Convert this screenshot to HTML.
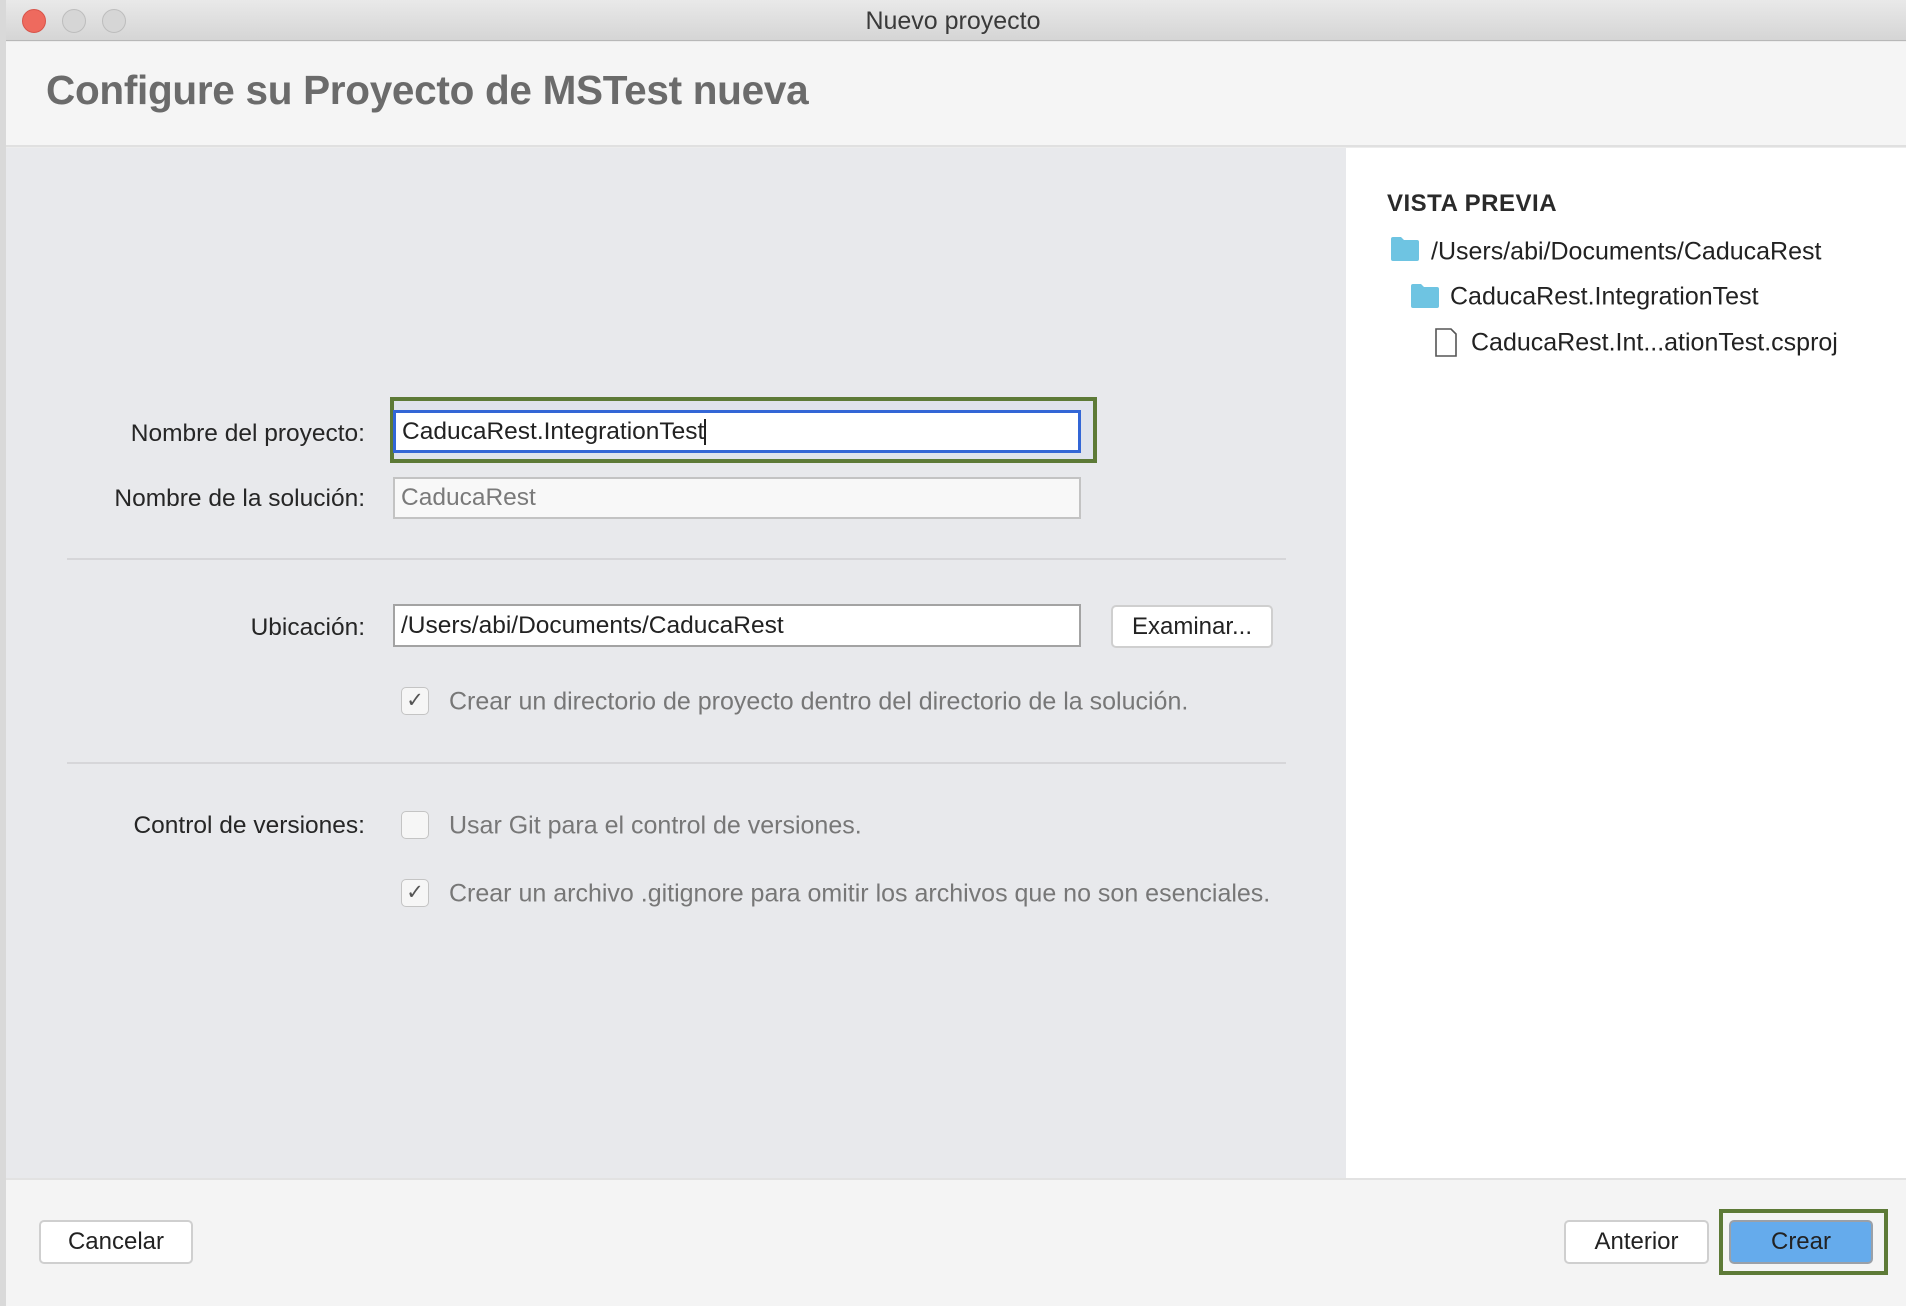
<!DOCTYPE html>
<html><head><meta charset="utf-8"><style>
*{box-sizing:border-box;margin:0;padding:0}
body{width:1906px;height:1306px;position:relative;overflow:hidden;background:#ececec;font-family:"Liberation Sans",sans-serif;color:#222}
.a{position:absolute}
.lbl{position:absolute;right:1541px;font-size:24.5px;color:#262626;white-space:nowrap;transform:translateY(-50%)}
.inp{position:absolute;background:#fff;border:2px solid #a9a9a9;font-size:24.5px;padding-left:6px;display:flex;align-items:center}
.cb{position:absolute;width:28px;height:28px;border:1.5px solid #c4c4c4;border-radius:5px;background:#f6f6f6;font-size:21px;color:#555;text-align:center;line-height:26px}
.ct{position:absolute;font-size:25px;color:#777;white-space:nowrap;transform:translateY(-50%)}
.btn{position:absolute;background:#fff;border:2px solid #cfcfcf;border-radius:5px;font-size:24px;display:flex;align-items:center;justify-content:center;color:#222}
.tv{position:absolute;font-size:25px;color:#222;white-space:nowrap;transform:translateY(-50%)}
</style></head><body>
<div class="a" style="left:0;top:0;width:6px;height:1306px;background:#d9d9d9"></div>
<div class="a" style="left:6px;top:0;width:1900px;height:41px;background:linear-gradient(#e9e9e9,#d5d5d5);border-bottom:1px solid #b8b8b8"></div>
<div class="a" style="left:22px;top:9px;width:24px;height:24px;border-radius:50%;background:#ee6a5e;border:1px solid #d8544a"></div>
<div class="a" style="left:62px;top:9px;width:24px;height:24px;border-radius:50%;background:#d6d6d6;border:1px solid #bdbdbd"></div>
<div class="a" style="left:102px;top:9px;width:24px;height:24px;border-radius:50%;background:#d6d6d6;border:1px solid #bdbdbd"></div>
<div class="a" style="left:0;width:1906px;top:7px;text-align:center;font-size:25px;color:#3a3a3a">Nuevo proyecto</div>
<div class="a" style="left:6px;top:42px;width:1900px;height:105px;background:#f5f5f5;border-bottom:2px solid #e0e0e0"></div>
<div class="a" style="left:46px;top:67px;font-size:40.5px;font-weight:bold;color:#6b6b6b;letter-spacing:-0.3px">Configure su Proyecto de MSTest nueva</div>
<div class="a" style="left:6px;top:148px;width:1340px;height:1030px;background:#e8e9ec"></div>
<div class="a" style="left:1346px;top:148px;width:560px;height:1030px;background:#fff"></div>
<div class="a" style="left:6px;top:1178px;width:1900px;height:128px;background:#f4f4f4;border-top:2px solid #e2e2e2"></div>

<div class="lbl" style="top:434px">Nombre del proyecto:</div>
<div class="a" style="left:390px;top:397px;width:707px;height:66px;border:4px solid #5d7a37;background:#dfe3ec"></div>
<div class="inp" style="left:393px;top:410px;width:688px;height:43px;border:3px solid #3366d6;color:#222">CaducaRest.IntegrationTest<span style="display:inline-block;width:2px;height:26px;background:#222"></span></div>
<div class="lbl" style="top:499px">Nombre de la solución:</div>
<div class="inp" style="left:393px;top:477px;width:688px;height:42px;background:#f8f8f8;border-color:#c3c3c3;color:#7a7a7a">CaducaRest</div>
<div class="a" style="left:67px;top:558px;width:1219px;height:2px;background:#d6d6d9"></div>

<div class="lbl" style="top:628px">Ubicación:</div>
<div class="inp" style="left:393px;top:604px;width:688px;height:43px;border-color:#a3a3a3">/Users/abi/Documents/CaducaRest</div>
<div class="btn" style="left:1111px;top:605px;width:162px;height:43px">Examinar...</div>
<div class="cb" style="left:401px;top:687px">✓</div>
<div class="ct" style="left:449px;top:702px">Crear un directorio de proyecto dentro del directorio de la solución.</div>
<div class="a" style="left:67px;top:762px;width:1219px;height:2px;background:#d6d6d9"></div>

<div class="lbl" style="top:826px">Control de versiones:</div>
<div class="cb" style="left:401px;top:811px"></div>
<div class="ct" style="left:449px;top:826px">Usar Git para el control de versiones.</div>
<div class="cb" style="left:401px;top:879px">✓</div>
<div class="ct" style="left:449px;top:894px">Crear un archivo .gitignore para omitir los archivos que no son esenciales.</div>

<div class="a" style="left:1387px;top:190px;font-size:24px;font-weight:bold;color:#2a2a2a;letter-spacing:0.5px">VISTA PREVIA</div>
<svg class="a" style="left:1391px;top:237px" width="28" height="24"><path d="M0 2 a2 2 0 0 1 2-2 h8 l3 3 h13 a2 2 0 0 1 2 2 v17 a2 2 0 0 1-2 2 h-24 a2 2 0 0 1-2-2z" fill="#6ec4e2"/></svg>
<div class="tv" style="left:1431px;top:252px">/Users/abi/Documents/CaducaRest</div>
<svg class="a" style="left:1411px;top:284px" width="28" height="24"><path d="M0 2 a2 2 0 0 1 2-2 h8 l3 3 h13 a2 2 0 0 1 2 2 v17 a2 2 0 0 1-2 2 h-24 a2 2 0 0 1-2-2z" fill="#6ec4e2"/></svg>
<div class="tv" style="left:1450px;top:297px">CaducaRest.IntegrationTest</div>
<svg class="a" style="left:1434px;top:328px" width="24" height="30"><path d="M2 1 h15 l5 5 v22 h-20z" fill="#fff" stroke="#555" stroke-width="1.6"/></svg>
<div class="tv" style="left:1471px;top:343px">CaducaRest.Int...ationTest.csproj</div>

<div class="btn" style="left:39px;top:1220px;width:154px;height:44px">Cancelar</div>
<div class="btn" style="left:1564px;top:1220px;width:145px;height:44px">Anterior</div>
<div class="a" style="left:1719px;top:1209px;width:169px;height:66px;border:4px solid #5d7a37"></div>
<div class="btn" style="left:1729px;top:1220px;width:144px;height:44px;background:#65abec;border-color:#9aa0a8">Crear</div>
</body></html>
